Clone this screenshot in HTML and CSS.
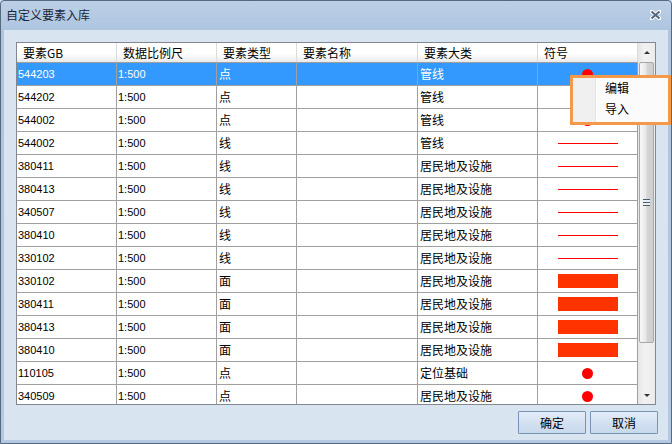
FILE: index.html
```html
<!DOCTYPE html>
<html lang="zh-CN">
<head>
<meta charset="utf-8">
<title>自定义要素入库</title>
<link rel="stylesheet" href="styles.css">
</head>
<body>
<div class="window">
  <div class="titlebar">
    <span class="title">自定义要素入库</span>
    <svg class="close" width="11" height="10" viewBox="0 0 11 10">
      <path d="M1.5 1.5 L9.5 8.5 M9.5 1.5 L1.5 8.5" stroke="#ffffff" stroke-width="4" stroke-linecap="round" fill="none"/>
      <path d="M1.5 1.5 L9.5 8.5 M9.5 1.5 L1.5 8.5" stroke="#56657a" stroke-width="2" fill="none"/>
    </svg>
  </div>
  <div class="client">
    <div class="table">
      <div class="grid">
        <div class="row head">
          <div class="hcell">要素GB</div>
          <div class="hcell">数据比例尺</div>
          <div class="hcell">要素类型</div>
          <div class="hcell">要素名称</div>
          <div class="hcell">要素大类</div>
          <div class="hcell">符号</div>
        </div>
        <div class="body">
          <div class="row selected"><div class="cell num">544203</div><div class="cell num">1:500</div><div class="cell">点</div><div class="cell"></div><div class="cell">管线</div><div class="cell sym"><span class="dot"></span></div></div>
          <div class="row"><div class="cell num">544202</div><div class="cell num">1:500</div><div class="cell">点</div><div class="cell"></div><div class="cell">管线</div><div class="cell sym"><span class="dot"></span></div></div>
          <div class="row"><div class="cell num">544002</div><div class="cell num">1:500</div><div class="cell">点</div><div class="cell"></div><div class="cell">管线</div><div class="cell sym"><span class="dot"></span></div></div>
          <div class="row"><div class="cell num">544002</div><div class="cell num">1:500</div><div class="cell">线</div><div class="cell"></div><div class="cell">管线</div><div class="cell sym"><span class="line"></span></div></div>
          <div class="row"><div class="cell num">380411</div><div class="cell num">1:500</div><div class="cell">线</div><div class="cell"></div><div class="cell">居民地及设施</div><div class="cell sym"><span class="line"></span></div></div>
          <div class="row"><div class="cell num">380413</div><div class="cell num">1:500</div><div class="cell">线</div><div class="cell"></div><div class="cell">居民地及设施</div><div class="cell sym"><span class="line"></span></div></div>
          <div class="row"><div class="cell num">340507</div><div class="cell num">1:500</div><div class="cell">线</div><div class="cell"></div><div class="cell">居民地及设施</div><div class="cell sym"><span class="line"></span></div></div>
          <div class="row"><div class="cell num">380410</div><div class="cell num">1:500</div><div class="cell">线</div><div class="cell"></div><div class="cell">居民地及设施</div><div class="cell sym"><span class="line"></span></div></div>
          <div class="row"><div class="cell num">330102</div><div class="cell num">1:500</div><div class="cell">线</div><div class="cell"></div><div class="cell">居民地及设施</div><div class="cell sym"><span class="line"></span></div></div>
          <div class="row"><div class="cell num">330102</div><div class="cell num">1:500</div><div class="cell">面</div><div class="cell"></div><div class="cell">居民地及设施</div><div class="cell sym"><span class="fill"></span></div></div>
          <div class="row"><div class="cell num">380411</div><div class="cell num">1:500</div><div class="cell">面</div><div class="cell"></div><div class="cell">居民地及设施</div><div class="cell sym"><span class="fill"></span></div></div>
          <div class="row"><div class="cell num">380413</div><div class="cell num">1:500</div><div class="cell">面</div><div class="cell"></div><div class="cell">居民地及设施</div><div class="cell sym"><span class="fill"></span></div></div>
          <div class="row"><div class="cell num">380410</div><div class="cell num">1:500</div><div class="cell">面</div><div class="cell"></div><div class="cell">居民地及设施</div><div class="cell sym"><span class="fill"></span></div></div>
          <div class="row"><div class="cell num">110105</div><div class="cell num">1:500</div><div class="cell">点</div><div class="cell"></div><div class="cell">定位基础</div><div class="cell sym"><span class="dot"></span></div></div>
          <div class="row"><div class="cell num">340509</div><div class="cell num">1:500</div><div class="cell">点</div><div class="cell"></div><div class="cell">居民地及设施</div><div class="cell sym"><span class="dot"></span></div></div>
        </div>
      </div>
      <div class="scrollbar">
        <div class="sb-btn up"><span class="tri-up"></span></div>
        <div class="thumb"><span class="grip"></span></div>
        <div class="sb-track"></div>
        <div class="sb-btn down"><span class="tri-down"></span></div>
      </div>
    </div>
    <div class="buttons">
      <button class="btn">确定</button>
      <button class="btn">取消</button>
    </div>
  </div>
  <div class="menu">
    <div class="gutter"></div>
    <div class="items">
      <div class="item">编辑</div>
      <div class="item">导入</div>
    </div>
  </div>
</div>
</body>
</html>
```

FILE: styles.css
```css
* { box-sizing: border-box; }
html, body { margin: 0; padding: 0; }
body {
  width: 672px;
  height: 444px;
  overflow: hidden;
  font-family: "Noto Sans CJK SC", "DejaVu Sans", sans-serif;
  font-size: 12px;
  color: #000;
  background: #d9e4f1;
}
.window {
  position: relative;
  width: 672px;
  height: 444px;
  display: flex;
  flex-direction: column;
  border: 1px solid #55697f;
  border-radius: 4px 4px 0 0;
  background: linear-gradient(#bccfe6, #aec4df 30px, #b3c8e1);
  padding: 0 3px 3px 3px;
}
.titlebar {
  height: 29px;
  display: flex;
  align-items: center;
  justify-content: space-between;
  padding: 0 7px 0 2px;
}
.title {
  font-size: 12px;
  color: #1b2636;
  line-height: 14px;
  margin-top: -2px;
}
.close { display: block; margin-top: -2px; }
.client {
  flex: 1;
  background: #d9e4f1;
  padding: 12px 12px 0 12px;
  display: flex;
  flex-direction: column;
}
.table {
  display: flex;
  width: 640px;
  height: 363px;
  border: 1px solid #828790;
  background: #fff;
}
.grid {
  width: 621px;
  display: flex;
  flex-direction: column;
}
.row {
  display: grid;
  grid-template-columns: 100px 100px 80px 121px 120px 100px;
  height: 23px;
  flex: none;
}
.head {
  height: 20px;
  background: linear-gradient(#ffffff 0%, #ffffff 55%, #f2f2f2 85%, #e9e9e9 100%);
  border-bottom: 1px solid #a0a0a0;
}
.hcell {
  padding-left: 6px;
  line-height: 19px;
  border-right: 1px solid #dcdcdc;
  white-space: nowrap;
}
.body {
  height: 341px;
  overflow: hidden;
  display: flex;
  flex-direction: column;
}
.cell {
  border-right: 1px solid #a0a0a0;
  border-bottom: 1px solid #a0a0a0;
  padding-left: 2px;
  line-height: 22px;
  white-space: nowrap;
  overflow: hidden;
}
.num {
  font-family: "Liberation Sans", Arial, sans-serif;
  font-size: 11px;
  padding-left: 1px;
}
.selected { background: #3399ff; color: #fff; }
.sym {
  display: flex;
  align-items: center;
  justify-content: center;
  padding-left: 0;
}
.dot {
  width: 11px;
  height: 11px;
  border-radius: 50%;
  background: #ff0000;
}
.line {
  width: 60px;
  height: 1px;
  background: #ff0000;
}
.fill {
  width: 60px;
  height: 14px;
  background: #ff3300;
}
.scrollbar {
  width: 17px;
  display: flex;
  flex-direction: column;
  background: linear-gradient(90deg, #e6e6e6, #f2f2f2 40%, #ececec);
}
.sb-btn {
  height: 19px;
  display: flex;
  align-items: center;
  justify-content: center;
  flex: none;
}
.down { height: 17px; }
.tri-up, .tri-down {
  width: 0;
  height: 0;
  border-left: 3px solid transparent;
  border-right: 3px solid transparent;
}
.tri-up { border-bottom: 3px solid #333; }
.tri-down { border-top: 3px solid #333; }
.thumb {
  height: 281px;
  margin: 0 1px;
  border: 1px solid #a8a8a8;
  border-radius: 2px;
  background: linear-gradient(90deg, #f7f7f7, #e8e8e8 45%, #d4d4d4 55%, #cfcfcf);
  display: flex;
  align-items: center;
  justify-content: center;
  flex: none;
}
.grip {
  width: 7px;
  height: 7px;
  background: repeating-linear-gradient(#4d5a6b 0, #4d5a6b 1px, #e8eef5 1px, #e8eef5 3px);
}
.sb-track { flex: 1; }
.buttons {
  display: flex;
  justify-content: flex-end;
  gap: 4px;
  margin-top: 6px;
  margin-right: -2px;
}
.btn {
  width: 68px;
  height: 23px;
  font-family: "Noto Sans CJK SC", sans-serif;
  font-size: 12px;
  color: #000;
  border: 1px solid #7893b6;
  border-radius: 1px;
  background: linear-gradient(#e4edf8, #d3e1f1 50%, #c8d9ec);
  padding: 0;
  line-height: 20px;
}
.menu {
  position: absolute;
  left: 569px;
  top: 74px;
  width: 101px;
  height: 50px;
  border: 3px solid #f4984a;
  background: #fbfbfb;
  display: flex;
}
.gutter {
  width: 23px;
  background: #f0f0f0;
  border-right: 1px solid #e2e3e3;
  box-shadow: 1px 0 0 #ffffff;
}
.items {
  flex: 1;
  padding: 0 0 0 9px;
  margin-top: -1px;
}
.item {
  height: 21px;
  line-height: 21px;
}
```
